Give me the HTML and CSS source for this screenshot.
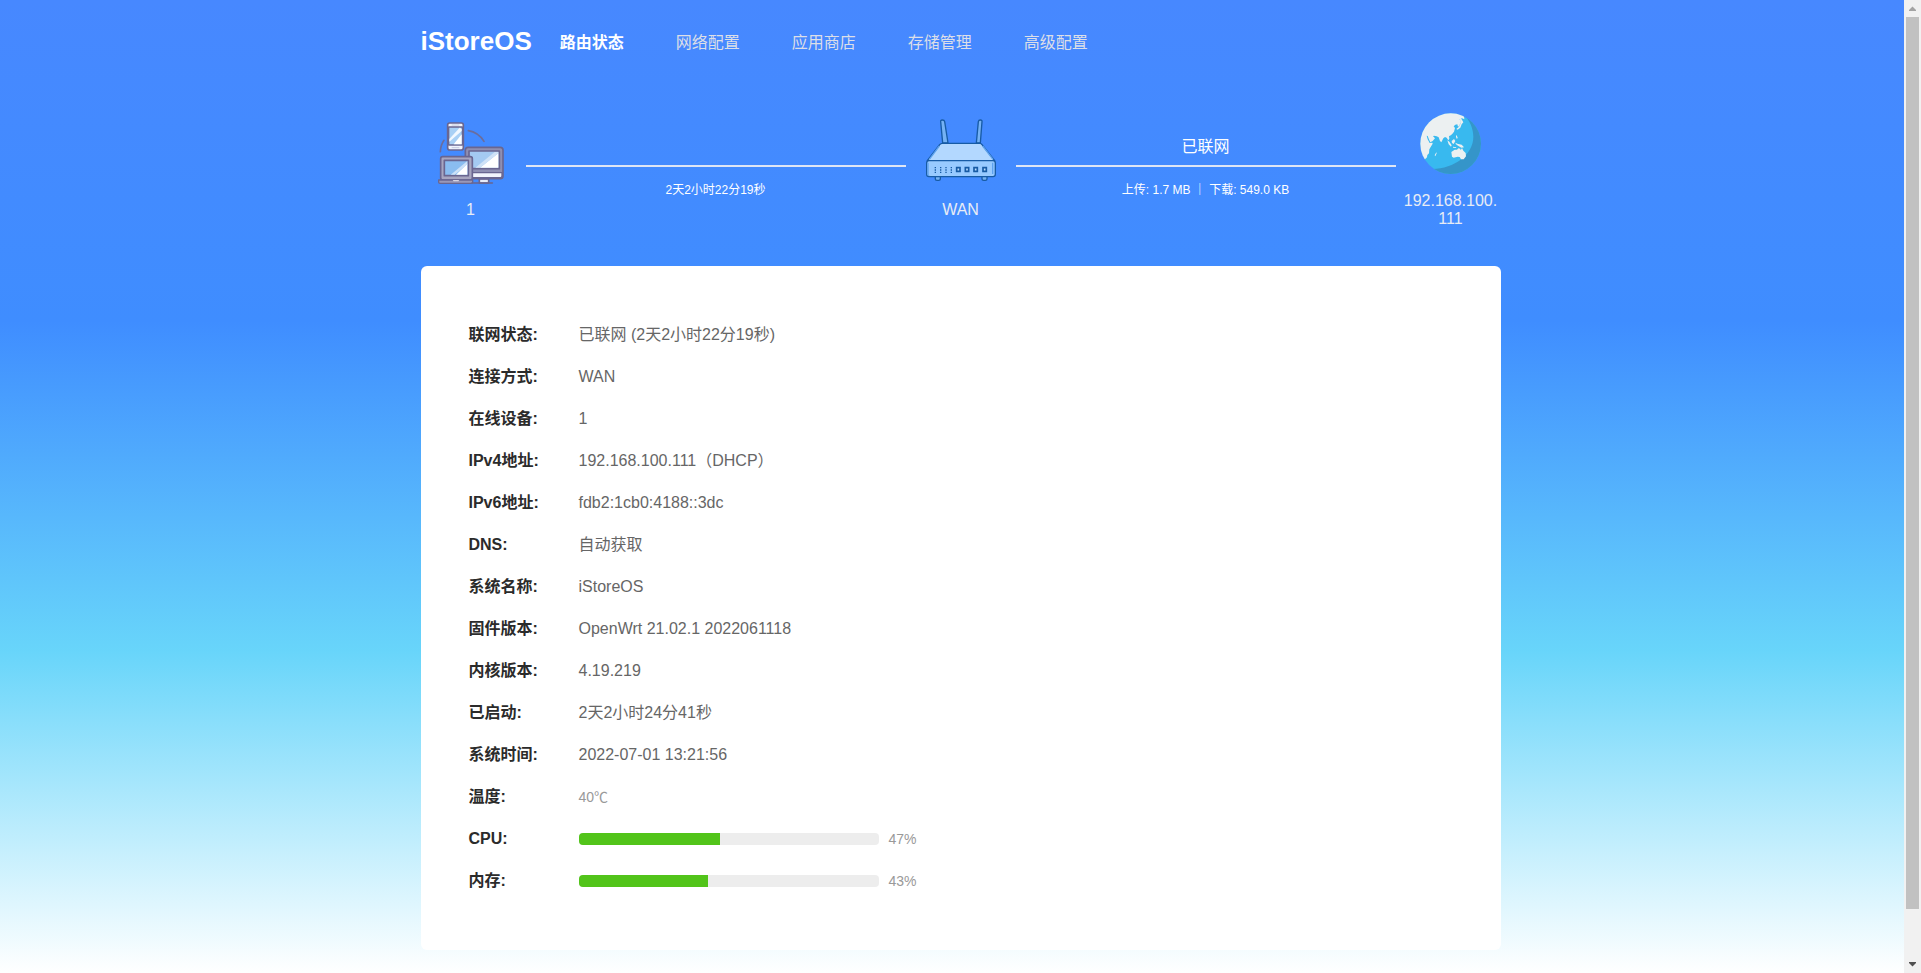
FILE: index.html
```html
<!DOCTYPE html>
<html lang="zh-CN">
<head>
<meta charset="utf-8">
<title>iStoreOS</title>
<link rel="stylesheet" href="styles.css">
</head>
<body>
<div class="page">
  <header class="header">
    <a class="logo" href="#">iStoreOS</a>
    <nav class="nav">
      <a class="active" href="#">路由状态</a>
      <a href="#">网络配置</a>
      <a href="#">应用商店</a>
      <a href="#">存储管理</a>
      <a href="#">高级配置</a>
    </nav>
  </header>

  <section class="network">
    <div class="device">
      <svg class="device-icon" viewBox="33 24 240 240" aria-hidden="true">
        <g fill="none" stroke="#6a6d9e" stroke-width="5" stroke-linecap="round">
          <path d="M61 140q1-20 11-34M145 77q30 5 47 32"/>
        </g>
        <g stroke="#6a6690" stroke-width="5" stroke-linejoin="round">
          <path d="M178 222h28v12h-28z" fill="#e8ecfa"/>
          <rect x="136" y="127" width="113" height="94" rx="8" fill="#8f8fb2"/>
          <path d="M139 203h107v10q0 5-5 5h-102z" fill="#f2f4fc" stroke-width="4"/>
          <rect x="147" y="138" width="91" height="53" fill="#a4caf2"/>
          <rect x="62" y="155" width="95" height="70" rx="6" fill="#a8a6c0"/>
          <rect x="73" y="166" width="72" height="46" fill="#8abdf0"/>
          <path d="M56 225h102v7q0 3-4 3H60q-4 0-4-3z" fill="#9a98b8" stroke-width="4"/>
          <path d="M156 234h61" fill="none" stroke-linecap="round"/>
          <rect x="83" y="54" width="47" height="81" rx="6" fill="#f0f3fc"/>
          <rect x="86" y="66" width="41" height="54" fill="#a9d0f5" stroke-width="4"/>
        </g>
        <path d="M235 145v43h-55z" fill="#fff"/><path d="M224 141h11v4l-55 43h-14z" fill="#cfe2f7"/>
        <path d="M142 176v33h-34z" fill="#fff"/><path d="M142 168v10l-38 31H92z" fill="#cbe1f8"/>
        <path d="M125 88v30h-24z" fill="#fff"/><path d="M125 72v6L88 110v-8l31-34z" fill="#f2f8ff"/>
        <path d="M98 225h20l-3 4h-14z" fill="#d5d4e3"/>
        <path d="M95 60h23M95 128h23" stroke="#c4c9df" stroke-width="3"/>
      </svg>
      <div class="device-name">1</div>
    </div>
    <div class="link">
      <div class="link-top"></div>
      <div class="link-bottom">2天2小时22分19秒</div>
    </div>
    <div class="device">
      <svg class="device-icon" viewBox="33 24 240 240" aria-hidden="true">
        <g fill="#75b2f4" stroke="#175ba5" stroke-width="4" stroke-linejoin="round">
          <path d="M98 114 92 50q-1-5 5-5 6 0 7 5l10 64zM199 114l6-64q1-5 6-5 6 0 5 5l-5 64z"/>
          <path d="M76 214h15v8q0 4-5 4h-5q-5 0-5-4zM216 214h15v8q0 4-5 4h-5q-5 0-5-4z"/>
          <path d="M97 115h113q4 0 6 4l38 48H52l37-48q3-4 8-4z" fill="#b3d8ff"/>
          <rect x="50" y="167" width="206" height="48" rx="7" fill="#98caff"/>
        </g>
        <path d="M88 123 58 163M218 123l31 40" stroke="#5ea2ef" stroke-width="4"/>
        <path d="M54 173v35q0 4 4 4M248 173v34" fill="none" stroke="#5ea2ef" stroke-width="4"/>
        <g fill="#b8dcff" stroke="#175ba5" stroke-width="5">
          <path d="M140 188h10v11h-10zM166 188h10v11h-10zM192 188h10v11h-10zM219 188h10v11h-10z"/>
        </g>
        <path d="M76 186v18M92 186v18M108 186v18M124 186v18" stroke="#175ba5" stroke-width="4" stroke-dasharray="4 3"/>
      </svg>
      <div class="device-name">WAN</div>
    </div>
    <div class="link">
      <div class="link-top">已联网</div>
      <div class="link-bottom">上传: 1.7 MB ｜ 下载: 549.0 KB</div>
    </div>
    <div class="device">
      <svg class="device-icon" viewBox="-12 -12 240 240" aria-hidden="true">
        <clipPath id="globe"><circle cx="107" cy="107" r="91"/></clipPath>
        <g clip-path="url(#globe)">
          <path d="M0 0h216v216H0z" fill="#38b9ef"/>
          <path d="M146 20C164 36 175 60 175 86 175 140 118 181 52 183V216h164V0h-70z" fill="#3595c9"/>
          <path d="M0 0h140l7 24 1 10-7-3-7 3 3 8-4 12-4 2-2-7-6 1-5 5 4 5-3 11-6 8-6 4-3 1 1 8-3 5-5-8-5-2-5 4-6 12-4-4-4-11-6-3-8-2-3 2 6 6-7 8-7 4-3-6-5-13-3-1 3 11 6 11 8-1 1 3-6 10-4 7-1 12-5 5-1 7-6 6-12 2z" fill="#ecf0f1"/>
          <path d="m135 31 5 3 5 9-5 6-4 10-8 6-4-2 8-7 4-8zM97 97l6 4 7 11-2 4-7-7zM110 99l7-6 4 6-5 9-5-3zM114 116l10 2-1 2-9-1zM122 104l5 3 13 3 7 8-8 1-10-6-7-5zM123 80l5 8-2 6-3-7zM109 132l10-7 7 0 4-4 6 1 1 5 4-7 4 8 7 7 1 10-7 9-8 0-4-7-6-1-12 3-5-3zM64 133l1 3-4 9-2-3z" fill="#ecf0f1"/>
        </g>
      </svg>
      <div class="device-name">192.168.100.111</div>
    </div>
  </section>

  <main class="card">
    <dl class="info">
      <div class="row"><dt>联网状态:</dt><dd>已联网 (2天2小时22分19秒)</dd></div>
      <div class="row"><dt>连接方式:</dt><dd>WAN</dd></div>
      <div class="row"><dt>在线设备:</dt><dd>1</dd></div>
      <div class="row"><dt>IPv4地址:</dt><dd>192.168.100.111（DHCP）</dd></div>
      <div class="row"><dt>IPv6地址:</dt><dd>fdb2:1cb0:4188::3dc</dd></div>
      <div class="row"><dt>DNS:</dt><dd>自动获取</dd></div>
      <div class="row"><dt>系统名称:</dt><dd>iStoreOS</dd></div>
      <div class="row"><dt>固件版本:</dt><dd>OpenWrt 21.02.1 2022061118</dd></div>
      <div class="row"><dt>内核版本:</dt><dd>4.19.219</dd></div>
      <div class="row"><dt>已启动:</dt><dd>2天2小时24分41秒</dd></div>
      <div class="row"><dt>系统时间:</dt><dd>2022-07-01 13:21:56</dd></div>
      <div class="row"><dt>温度:</dt><dd class="minor">40℃</dd></div>
      <div class="row"><dt>CPU:</dt><dd class="minor"><span class="bar"><span class="bar-fill" style="width:47%"></span></span>47%</dd></div>
      <div class="row"><dt>内存:</dt><dd class="minor"><span class="bar"><span class="bar-fill" style="width:43%"></span></span>43%</dd></div>
    </dl>
  </main>
</div>
<div class="scrollbar" aria-hidden="true">
  <svg class="arrow" viewBox="0 0 17 17"><path d="M5 11h7v-1L8.500 6.500 5 10z" fill="#a3a3a3"/></svg>
  <div class="track"><div class="thumb"></div></div>
  <svg class="arrow" viewBox="0 0 17 17"><path d="M5 6h7v1L8.500 10.500 5 7z" fill="#505050"/></svg>
</div>
</body>
</html>
```
FILE: styles.css
```css
* { box-sizing: border-box; }

body {
  margin: 0;
  min-height: 100vh;
  font: 16px/18px "Liberation Sans", Arial, "Noto Sans CJK SC", sans-serif;
  background: linear-gradient(180deg, #4788ff 0%, #3f8dff 33%, #68d5fa 67%, #ffffff 100%);
}

a { text-decoration: none; }

.page {
  max-width: 1080px;
  margin: 0 auto;
  padding-bottom: 23px;
}

.header {
  display: flex;
  align-items: center;
  gap: 28px;
  height: 84px;
}

.logo {
  padding-bottom: 2px;
  color: #fff;
  font-size: 26px;
  line-height: 30px;
  font-weight: bold;
}

.nav { display: flex; gap: 52px; padding-top: 2px; }
.nav a { color: #dcdfe8; }
.nav .active { color: #fff; font-weight: bold; }

.network {
  display: flex;
  align-items: center;
  padding: 20px 0 38px;
}

.device {
  flex: none;
  width: 100px;
  display: flex;
  flex-direction: column;
  align-items: center;
  gap: 8px;
}

.device-icon { width: 80px; height: 80px; }

.device-name {
  color: #e8ecf5;
  max-width: 100%;
  text-align: center;
  word-break: break-all;
}

.link {
  flex: 1;
  margin: 0 5px;
  color: #fff;
  text-align: center;
}

.link-top {
  height: 39px;
  padding-top: 10px;
  border-bottom: 2px solid #dfe6f5;
}

.link-bottom {
  height: 37px;
  padding-top: 14px;
  font-size: 12px;
}

.card {
  padding: 48px;
  background: #fff;
  border-radius: 6px;
}

.info { margin: 0; }

.row {
  display: flex;
  align-items: center;
  height: 42px;
}

.row dt {
  width: 110px;
  color: #2b2b2b;
  font-weight: bold;
}

.row dd {
  display: flex;
  align-items: center;
  gap: 10px;
  margin: 0;
  color: #666;
}

.row .minor { color: #999; font-size: 14px; }

.bar {
  width: 300px;
  height: 12px;
  border-radius: 4px;
  background: #ededed;
  overflow: hidden;
}

.bar-fill {
  display: block;
  height: 100%;
  background: #52c41a;
}

.scrollbar {
  position: fixed;
  top: 0;
  right: 0;
  bottom: 0;
  width: 17px;
  display: flex;
  flex-direction: column;
  background: #f1f1f1;
}

.arrow { width: 17px; height: 17px; flex: none; }

.track { flex: 1; padding: 0 2px; }

.thumb {
  height: 95%;
  background: #c1c1c1;
}
```
